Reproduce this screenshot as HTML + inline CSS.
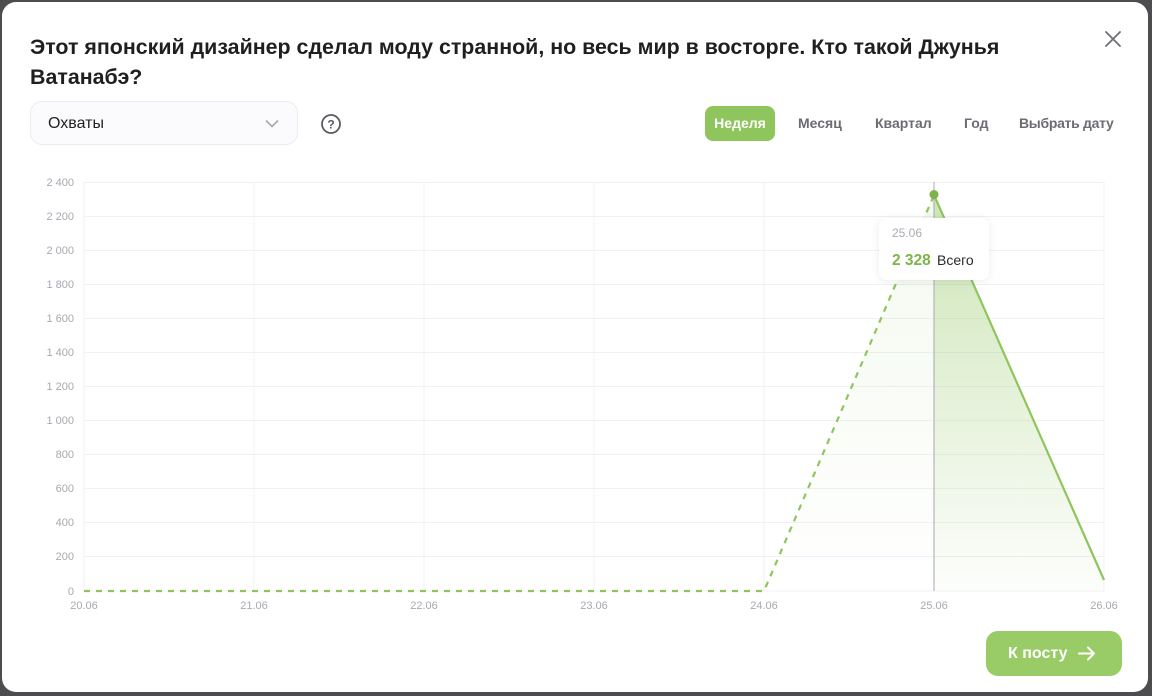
<!DOCTYPE html>
<html><head><meta charset="utf-8"><style>
html,body{margin:0;padding:0;width:1152px;height:696px;overflow:hidden;background:#4d4d4f;font-family:"Liberation Sans",Arial,sans-serif}
.modal{position:absolute;left:2px;top:2px;width:1146px;height:690px;background:#fff;border-radius:14px;overflow:hidden}
h1{position:absolute;left:28px;top:30px;margin:0;width:1040px;font-size:21.4px;line-height:30px;font-weight:700;color:#1f1f1f}
.sel{position:absolute;left:28px;top:99px;width:268px;height:44px;border:1px solid #ececf0;border-radius:12px;background:#fbfbfd;box-sizing:border-box}
.sel span{position:absolute;left:17px;top:13px;font-size:16px;color:#222}
.tabs{position:absolute;top:104px;left:703px;height:36px;font-size:14px;font-weight:700;color:#6c6c72}
.tab{position:absolute;top:0;height:35px;line-height:35px;white-space:nowrap}
.on{background:#8fc55d;color:#fff;border-radius:8px;padding:0 9px;width:52px;text-align:center}
.btn{position:absolute;left:984px;top:629px;width:136px;height:45px;background:#99cb66;border-radius:12px;color:#fff;font-weight:700;font-size:16px;line-height:45px;box-sizing:border-box;padding-left:22px}
</style></head><body>
<div class="modal">
<h1>Этот японский дизайнер сделал моду странной, но весь мир в восторге. Кто такой Джунья Ватанабэ?</h1>
<svg style="position:absolute;left:1102px;top:28px" width="18" height="18" viewBox="0 0 18 18"><path d="M2 2L16 16M16 2L2 16" stroke="#6e6e74" stroke-width="1.8" stroke-linecap="round"/></svg>
<div class="sel"><span>Охваты</span>
<svg style="position:absolute;left:234px;top:17px" width="14" height="9" viewBox="0 0 14 9"><path d="M1 1.5L7 7.5L13 1.5" fill="none" stroke="#a8a8ae" stroke-width="1.6"/></svg></div>
<svg style="position:absolute;left:318px;top:111px" width="22" height="22" viewBox="0 0 22 22"><circle cx="11" cy="11" r="9" fill="none" stroke="#5a5a60" stroke-width="1.8"/><text x="11" y="15.5" text-anchor="middle" font-size="12" font-weight="700" fill="#5a5a60" font-family="Liberation Sans">?</text></svg>
<div class="tabs">
<div class="tab on" style="left:0">Неделя</div>
<div class="tab" style="left:93px">Месяц</div>
<div class="tab" style="left:170px">Квартал</div>
<div class="tab" style="left:259px">Год</div>
<div class="tab" style="left:314px;letter-spacing:-0.3px">Выбрать дату</div>
</div>
<svg style="position:absolute;left:-2px;top:-2px" width="1152" height="696" font-family="Liberation Sans" font-size="11" fill="#a8a8b0">
<defs><linearGradient id="g" x1="0" y1="0" x2="0" y2="1"><stop offset="0" stop-color="#8fc55d" stop-opacity="0.45"/><stop offset="1" stop-color="#8fc55d" stop-opacity="0.02"/></linearGradient>
<linearGradient id="g2" x1="0" y1="0" x2="0" y2="1"><stop offset="0" stop-color="#8fc55d" stop-opacity="0.1"/><stop offset="1" stop-color="#8fc55d" stop-opacity="0"/></linearGradient></defs>
<g stroke="#f1f1f4" stroke-width="1">
<path d="M84 182V591M254 182V591M424 182V591M594 182V591M764 182V591M1104 182V591"/>
<path d="M84 182.5H1104M84 216.5H1104M84 250.5H1104M84 284.5H1104M84 318.5H1104M84 352.5H1104M84 386.5H1104M84 420.5H1104M84 454.5H1104M84 488.5H1104M84 522.5H1104M84 556.5H1104M84 591H1104"/>
</g>
<g text-anchor="end">
<text x="74" y="186">2 400</text><text x="74" y="220">2 200</text><text x="74" y="254">2 000</text><text x="74" y="288">1 800</text><text x="74" y="322">1 600</text><text x="74" y="356">1 400</text><text x="74" y="390">1 200</text><text x="74" y="424">1 000</text><text x="74" y="458">800</text><text x="74" y="492">600</text><text x="74" y="526">400</text><text x="74" y="560">200</text><text x="74" y="595">0</text>
</g>
<g text-anchor="middle">
<text x="84" y="609">20.06</text><text x="254" y="609">21.06</text><text x="424" y="609">22.06</text><text x="594" y="609">23.06</text><text x="764" y="609">24.06</text><text x="934" y="609">25.06</text><text x="1104" y="609">26.06</text>
</g>
<path d="M764 591L934 195L934 591Z" fill="url(#g2)"/>
<path d="M934 195L1104 580L1104 591L934 591Z" fill="url(#g)"/>
<line x1="934" y1="182" x2="934" y2="591" stroke="#a8a8b0" stroke-width="1"/>
<path d="M84 591H764L934 195" fill="none" stroke="#8fc55d" stroke-width="2.2" stroke-dasharray="6 6"/>
<path d="M934 195L1104 580" fill="none" stroke="#8fc55d" stroke-width="2.2"/>
<circle cx="934" cy="194.5" r="4.5" fill="#80b24c"/>
<rect x="879" y="218" width="110" height="62" rx="8" fill="#fff" style="filter:drop-shadow(0 1px 4px rgba(0,0,0,.08))"/>
<text x="892" y="237" font-size="12" fill="#aaaab2">25.06</text>
<text x="892" y="265" font-size="15.5" font-weight="700" fill="#7db546">2 328</text>
<text x="937" y="265" font-size="14" fill="#2a2a2a">Всего</text>
</svg>
<div class="btn">К посту
<svg style="position:absolute;left:92px;top:15px" width="18" height="15" viewBox="0 0 18 15"><path d="M1 7.5H16M10 1.5L16 7.5L10 13.5" fill="none" stroke="#fff" stroke-width="2" stroke-linecap="round" stroke-linejoin="round"/></svg></div>
</div>
</body></html>
